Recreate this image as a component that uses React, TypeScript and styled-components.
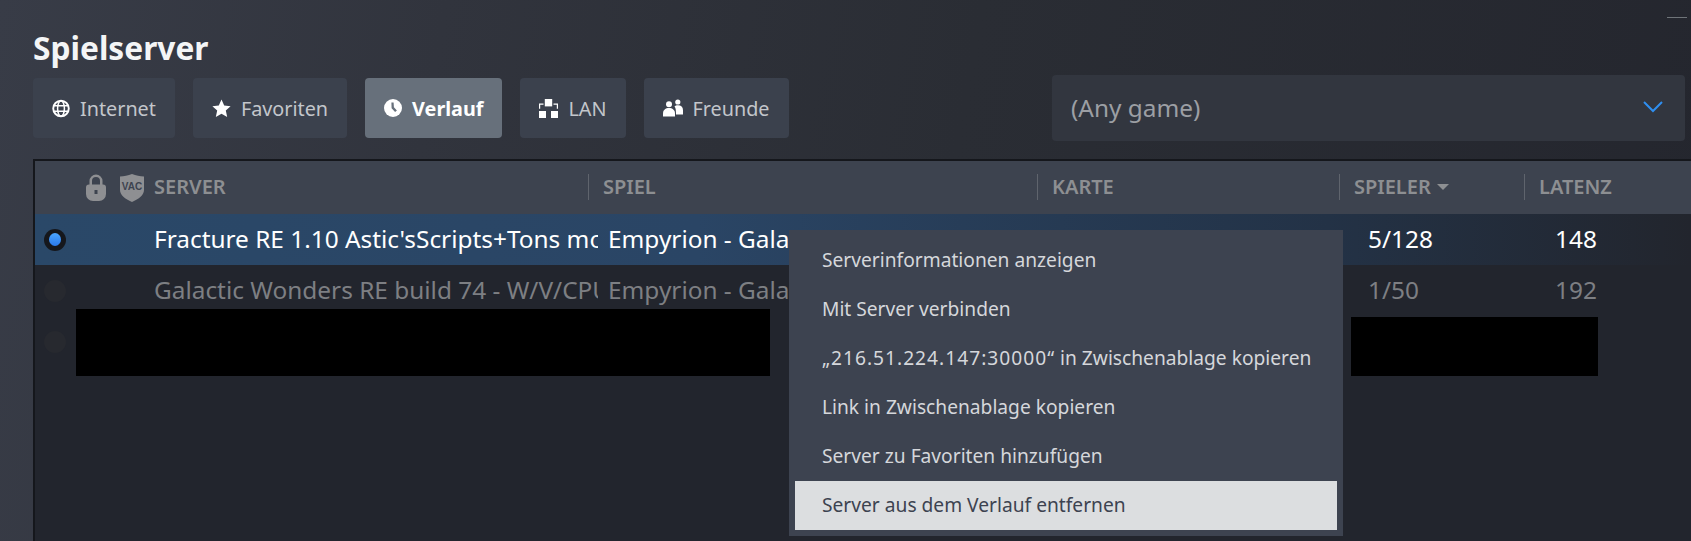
import React, { FC, ReactNode } from "react";
import styled, { createGlobalStyle } from "styled-components";

const GlobalStyle = createGlobalStyle`
  html, body {
    margin: 0;
    padding: 0;
    background: #2b2e36;
    font-family: "Noto Sans", "Liberation Sans", sans-serif;
  }
`;

const Page = styled.div`
  position: relative;
  width: 1691px;
  height: 541px;
  overflow: hidden;
  display: flex;
  flex-direction: column;
  background: linear-gradient(100deg, #383c47 0%, #31343d 25%, #2a2d34 55%, #24262e 100%);
`;

const Minimize = styled.div`
  position: absolute;
  top: 17px;
  right: 4px;
  width: 20px;
  height: 1px;
  background: #6f7479;
`;

const Title = styled.h1`
  margin: 0;
  padding: 27px 0 0 33px;
  height: 75px;
  box-sizing: border-box;
  font-size: 31.7px;
  line-height: 42px;
  font-weight: 700;
  color: #f4f5f6;
`;

const Toolbar = styled.div`
  display: flex;
  align-items: center;
  height: 66px;
  padding: 0 6px 0 33px;
`;

const Tabs = styled.div`
  display: flex;
  gap: 18px;
`;

const Tab = styled.div<{ $active?: boolean }>`
  display: flex;
  align-items: center;
  gap: 10px;
  height: 60px;
  padding: 0 19px;
  border-radius: 4px;
  background: ${(p) => (p.$active ? "#67707b" : "#3b414d")};
  color: ${(p) => (p.$active ? "#ffffff" : "#c3c6cb")};
  font-size: 19.8px;
  font-weight: ${(p) => (p.$active ? 700 : 400)};

  svg {
    display: block;
    flex: none;
  }
`;

const GameSelect = styled.div`
  margin-left: auto;
  width: 633px;
  height: 66px;
  box-sizing: border-box;
  padding: 0 22px 2px 19px;
  display: flex;
  align-items: center;
  justify-content: space-between;
  border-radius: 4px;
  background: #32363f;
  color: #9c9fa4;
  font-size: 24.4px;
`;

const Table = styled.div`
  margin: 18px 0 0 33px;
  flex: 1;
  border-left: 2px solid #15171c;
  border-top: 2px solid #15171c;
  background: #22252d;
`;

const HeaderRow = styled.div`
  display: grid;
  grid-template-columns: 119px 434px 449px 302px 185px 1fr;
  height: 53px;
  padding-bottom: 2px;
  box-sizing: border-box;
  background: #3d434f;
  color: #8d8f92;
  font-size: 20px;
  font-weight: 600;
`;

const HeaderIcons = styled.div`
  display: flex;
  align-items: center;
  justify-content: flex-end;
  gap: 14px;
  padding: 2px 10px 0 0;
`;

const HeaderCell = styled.div<{ $divider?: boolean }>`
  display: flex;
  align-items: center;
  gap: 6px;

  ${(p) =>
    p.$divider &&
    `
    &::before {
      content: "";
      width: 1px;
      height: 26px;
      margin-right: 8px;
      background: #5f646d;
    }
  `}
`;

const SortArrow = styled.span`
  width: 0;
  height: 0;
  border-left: 6px solid transparent;
  border-right: 6px solid transparent;
  border-top: 6px solid #8d8f92;
`;

const Row = styled.div<{ $selected?: boolean }>`
  display: grid;
  grid-template-columns: 119px 444px 439px 302px 185px 1fr;
  align-items: center;
  height: 51px;
  font-size: 24.4px;
  color: ${(p) => (p.$selected ? "#ffffff" : "#7d7f83")};
  background: ${(p) =>
    p.$selected
      ? "linear-gradient(90deg, #2a4868 0%, #2a4565 40%, #233246 78%, #22252d 100%)"
      : "transparent"};
`;

const RadioCell = styled.div`
  padding-left: 9px;
`;

const Radio = styled.div<{ $on?: boolean }>`
  width: 22px;
  height: 22px;
  border-radius: 50%;
  display: flex;
  align-items: center;
  justify-content: center;
  background: ${(p) => (p.$on ? "#15171c" : "#27292f")};

  &::after {
    content: "";
    display: ${(p) => (p.$on ? "block" : "none")};
    width: 12px;
    height: 13px;
    border-radius: 50%;
    background: linear-gradient(180deg, #4ba6ff, #2a78ea);
  }
`;

const Cell = styled.div<{ $pad?: number }>`
  padding: 0 0 3px ${(p) => p.$pad ?? 0}px;
  overflow: hidden;
  white-space: nowrap;
`;

// the context menu covers the rest of the game name, so it stops at the menu's edge
const GameCell = styled(Cell)`
  width: 191px;
  box-sizing: border-box;
`;

const Redaction = styled.div<{ $x: number; $y: number; $w: number; $h: number }>`
  position: absolute;
  left: ${(p) => p.$x}px;
  top: ${(p) => p.$y}px;
  width: ${(p) => p.$w}px;
  height: ${(p) => p.$h}px;
  background: #000;
`;

const Menu = styled.div`
  position: absolute;
  left: 789px;
  top: 230px;
  width: 554px;
  box-sizing: border-box;
  padding: 6px;
  background: #3d4350;
`;

const MenuItem = styled.div<{ $hover?: boolean }>`
  height: 49px;
  box-sizing: border-box;
  padding: 0 0 2px 27px;
  display: flex;
  align-items: center;
  white-space: pre;
  font-size: 19.2px;
  color: ${(p) => (p.$hover ? "#3d4350" : "#d5d7db")};
  background: ${(p) => (p.$hover ? "#dcdee0" : "transparent")};
`;

const Address = styled.span`
  letter-spacing: 1px;
`;

const GlobeIcon = () => (
  <svg width="18" height="19" viewBox="0 0 19 19" fill="none" stroke="#fff" strokeWidth="2">
    <circle cx="9.5" cy="9.5" r="8.2" />
    <ellipse cx="9.5" cy="9.5" rx="3.6" ry="8.2" strokeWidth="1.6" />
    <path d="M1.5 6.6h16M1.5 12.4h16" strokeWidth="1.6" />
  </svg>
);

const StarIcon = () => (
  <svg width="19" height="19" viewBox="0 0 19 19" fill="#fff">
    <path d="M9.5 .6l2.7 6 6.4.7-4.8 4.3 1.4 6.4-5.7-3.3-5.7 3.3 1.4-6.4L.4 7.3l6.4-.7z" />
  </svg>
);

const ClockIcon = () => (
  <svg width="18" height="18" viewBox="0 0 18 18">
    <circle cx="9" cy="9" r="9" fill="#fff" />
    <path d="M7.4 3.6l2.2-.2.3 4.8 3 3.2-1.8 1.6-3.5-3.8z" fill="#67707b" />
  </svg>
);

const LanIcon = () => (
  <svg width="19" height="19" viewBox="0 0 19 19" fill="#fff">
    <rect x="5.8" y="0" width="7.4" height="7.4" />
    <rect x="0" y="12" width="7" height="7" />
    <rect x="12" y="12" width="7" height="7" />
    <path d="M0 4.5h4.5v1.2H1.2v4.1H0zM14.5 4.5H19v5.3h-1.200V5.700h-3.300z" />
  </svg>
);

const FriendsIcon = () => (
  <svg width="20" height="18" viewBox="0 0 20 18" fill="#fff">
    <circle cx="6" cy="5.2" r="3" />
    <path d="M0 17.600v-3.200C0 11 2.600 9 6 9s6 2 6 5.400v3.200z" />
    <circle cx="14.800" cy="3" r="2.600" />
    <path d="M13 15.400h7v-4.200c0-3-2-4.900-5-4.900-1.500 0-2.700.5-3.500 1.300 1.400 1.300 1.500 4.800 1.500 7.800z" />
  </svg>
);

const ChevronIcon = () => (
  <svg width="20" height="12" viewBox="0 0 20 12" fill="none" stroke="#2f8ff0" strokeWidth="2">
    <path d="M1 1l9 9 9-9" />
  </svg>
);

const LockIcon = () => (
  <svg width="20" height="27" viewBox="0 0 20 27">
    <path
      fillRule="evenodd"
      fill="#8e8f92"
      d="M3.500 11V7a6.500 6.500 0 0 1 13 0v4H14V7a4 4 0 0 0-8 0v4z"
    />
    <path
      fillRule="evenodd"
      fill="#8e8f92"
      d="M3 10.500h14a3 3 0 0 1 3 3V20a7 7 0 0 1-7 7H7a7 7 0 0 1-7-7v-6.500a3 3 0 0 1 3-3zM8.500 16v4h3v-4z"
    />
  </svg>
);

const VacIcon = () => (
  <svg width="24" height="28" viewBox="0 0 24 28">
    <path fill="#8e8f92" d="M0 2.500C4 2.500 8 1.500 12 0c4 1.500 8 2.500 12 2.500V16c0 5-5 9-12 12C5 25 0 21 0 16z" />
    <text x="12" y="15.500" textAnchor="middle" fontSize="10" fontWeight="700" fill="#3d434f" fontFamily="'Liberation Sans', sans-serif">
      VAC
    </text>
  </svg>
);

const tabs: { label: string; icon: ReactNode; active?: boolean }[] = [
  { label: "Internet", icon: <GlobeIcon /> },
  { label: "Favoriten", icon: <StarIcon /> },
  { label: "Verlauf", icon: <ClockIcon />, active: true },
  { label: "LAN", icon: <LanIcon /> },
  { label: "Freunde", icon: <FriendsIcon /> },
];

const menuItems: ReactNode[] = [
  "Serverinformationen anzeigen",
  "Mit Server verbinden",
  <>
    <Address>„216.51.224.147:30000“</Address> in Zwischenablage kopieren
  </>,
  "Link in Zwischenablage kopieren",
  "Server zu Favoriten hinzufügen",
  "Server aus dem Verlauf entfernen",
];

const App: FC = () => {
  return (
    <>
      <GlobalStyle />
      <Page>
        <Minimize />
        <Title>Spielserver</Title>
        <Toolbar>
          <Tabs>
            {tabs.map((t) => (
              <Tab key={t.label} $active={t.active}>
                {t.icon}
                {t.label}
              </Tab>
            ))}
          </Tabs>
          <GameSelect>
            (Any game)
            <ChevronIcon />
          </GameSelect>
        </Toolbar>
        <Table>
          <HeaderRow>
            <HeaderIcons>
              <LockIcon />
              <VacIcon />
            </HeaderIcons>
            <HeaderCell>SERVER</HeaderCell>
            <HeaderCell $divider>SPIEL</HeaderCell>
            <HeaderCell $divider>KARTE</HeaderCell>
            <HeaderCell $divider>
              SPIELER
              <SortArrow />
            </HeaderCell>
            <HeaderCell $divider>LATENZ</HeaderCell>
          </HeaderRow>
          <Row $selected>
            <RadioCell>
              <Radio $on />
            </RadioCell>
            <Cell>Fracture RE 1.10 Astic'sScripts+Tons more</Cell>
            <GameCell $pad={10}>Empyrion - Galactic Survival</GameCell>
            <Cell />
            <Cell $pad={29}>5/128</Cell>
            <Cell $pad={31}>148</Cell>
          </Row>
          <Row>
            <RadioCell>
              <Radio />
            </RadioCell>
            <Cell>Galactic Wonders RE build 74 - W/V/CPU limits</Cell>
            <GameCell $pad={10}>Empyrion - Galactic Survival</GameCell>
            <Cell />
            <Cell $pad={29}>1/50</Cell>
            <Cell $pad={31}>192</Cell>
          </Row>
          <Row>
            <RadioCell>
              <Radio />
            </RadioCell>
          </Row>
        </Table>
        <Redaction $x={76} $y={309} $w={694} $h={67} />
        <Redaction $x={1351} $y={317} $w={247} $h={59} />
        <Menu>
          {menuItems.map((item, i) => (
            <MenuItem key={i} $hover={i === menuItems.length - 1}>
              {item}
            </MenuItem>
          ))}
        </Menu>
      </Page>
    </>
  );
};

export default App;
